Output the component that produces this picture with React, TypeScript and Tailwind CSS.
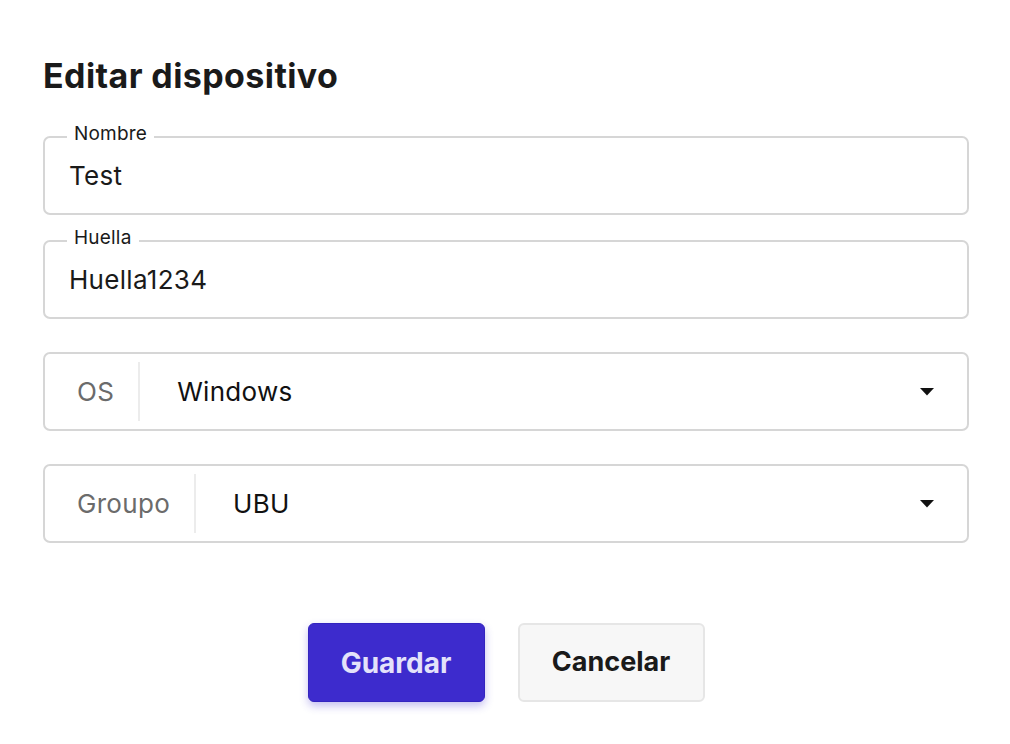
import { ReactNode } from "react";

const font = { fontFamily: "Inter, 'Noto Sans', sans-serif" };

function TextField({ label, value }: { label: string; value: string }) {
  return (
    <div className="relative flex h-[79px] items-center rounded-[7px] border-2 border-[#d6d6d6] px-[24px]">
      <span className="absolute -top-[17px] left-[22px] bg-white px-[7px] text-[19px] leading-[26px] tracking-[0.2px] text-[#1a1a1a]">
        {label}
      </span>
      <span className="text-[26px] tracking-[0.3px] text-[#1a1a1a]">{value}</span>
    </div>
  );
}

function Caret() {
  return (
    <svg width="14" height="8" viewBox="0 0 14 8" className="shrink-0">
      <path d="M0 0h14L7 7.5z" fill="#111" />
    </svg>
  );
}

function SelectField({ addon, value }: { addon: string; value: ReactNode }) {
  return (
    <div className="flex h-[79px] items-stretch rounded-[7px] border-2 border-[#d6d6d6]">
      <div className="my-[8px] flex items-center border-r-2 border-[#ececec] pl-[32px] pr-[24px] text-[26px] tracking-[0.3px] text-[#6b6b6b]">
        {addon}
      </div>
      <div className="flex flex-1 items-center justify-between rounded-tl-[8px] pl-[37px] pr-[33px]">
        <span className="text-[26px] tracking-[0.3px] text-[#111]">{value}</span>
        <Caret />
      </div>
    </div>
  );
}

export default function App() {
  return (
    <div className="min-h-screen w-full bg-white" style={font}>
      <div className="flex flex-col pl-[43px] pr-[41px] pt-[56px]">
        <h1 className="text-[34px] font-bold leading-[40px] tracking-[0.4px] text-[#1a1a1a]">
          Editar dispositivo
        </h1>
        <div className="mt-[40px] flex flex-col">
          <TextField label="Nombre" value="Test" />
          <div className="mt-[25px]">
            <TextField label="Huella" value="Huella1234" />
          </div>
          <div className="mt-[33px]">
            <SelectField addon="OS" value="Windows" />
          </div>
          <div className="mt-[33px]">
            <SelectField addon="Groupo" value="UBU" />
          </div>
        </div>
        <div className="mt-[80px] flex justify-center gap-[33px]">
          <button className="h-[79px] w-[177px] rounded-[6px] border border-[#3324bf] bg-[#3d2bcd] text-[28px] font-bold text-[#e4e2fa] shadow-[0_4px_8px_rgba(61,43,205,0.3)]">
            Guardar
          </button>
          <button className="h-[79px] w-[187px] rounded-[6px] border-2 border-[#e6e6e6] bg-[#f7f7f7] text-[27px] font-bold text-[#1a1a1a]">
            Cancelar
          </button>
        </div>
      </div>
    </div>
  );
}
